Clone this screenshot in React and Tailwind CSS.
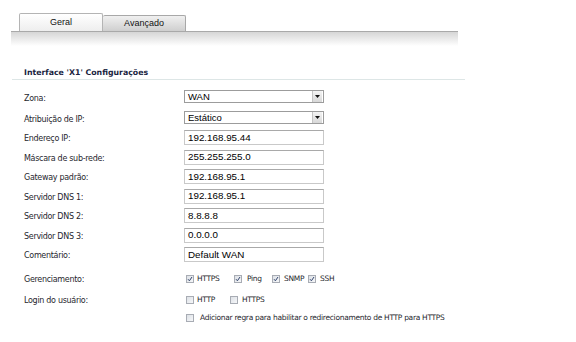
import React from "react";

const lbl = "text-[8px] leading-none text-[#1f1f2e] [font-family:'DejaVu_Sans',sans-serif] tracking-[-0.3px]";

function Select({ value }) {
  return (
    <div className="w-[140px] h-[13px] border border-[#9c9c9c] bg-white flex items-center">
      <span className="flex-1 pl-[3px] text-[9.5px] leading-none text-black [font-family:'Liberation_Sans',Arial,sans-serif]">{value}</span>
      <div className="w-[10px] h-[11px] mr-[1px] border-l border-[#c4c4c4] bg-gradient-to-b from-[#f4f4f4] to-[#d8d8d8] flex items-center justify-center">
        <svg width="5" height="3" viewBox="0 0 5 3"><path d="M0 0h5L2.5 3z" fill="#111" /></svg>
      </div>
    </div>
  );
}

function Input({ value }) {
  return (
    <div className="w-[140px] h-[15px] border border-[#c9c9c9] border-t-[#a9a9a9] bg-white flex items-center pl-[3px] text-[9.8px] leading-none text-black [font-family:'Liberation_Sans',Arial,sans-serif]">
      {value}
    </div>
  );
}

function Check({ checked }) {
  return (
    <div className="w-[8px] h-[8px] border border-[#a8acb4] bg-gradient-to-br from-[#dde1e6] to-[#f6f7f9] flex items-center justify-center shrink-0">
      {checked && (
        <svg width="6" height="6" viewBox="0 0 6 6"><path d="M1 3.2 L2.4 4.8 L5 1" stroke="#34456e" strokeWidth="1" fill="none" /></svg>
      )}
    </div>
  );
}

const cbText = "text-[7.5px] leading-none text-[#1f1f2e] [font-family:'DejaVu_Sans',sans-serif] tracking-[-0.3px]";

function Row({ label, h, children, lo = 3 }) {
  return (
    <div className={`flex items-center ${h}`}>
      <div className="w-[184px] shrink-0 pl-[24px]">
        <span className={`${lbl} block`} style={{ marginTop: lo }}>{label}</span>
      </div>
      <div className="flex items-center">{children}</div>
    </div>
  );
}

export default function App() {
  return (
    <div className="w-[576px] h-[342px] bg-white overflow-hidden relative">
      <div className="flex items-end pl-[19px] pt-[13px] h-[31px]">
        <div className="w-[84px] h-[18px] border border-b-0 border-[#b4b4b4] rounded-t-[2px] bg-gradient-to-b from-[#ffffff] to-[#eeeeee] flex items-center justify-center text-[9px] text-[#111] [font-family:'Liberation_Sans',Arial,sans-serif]">
          Geral
        </div>
        <div className="w-[83px] h-[16px] border border-b-0 border-l-0 border-[#a8a8a8] rounded-t-[2px] bg-gradient-to-b from-[#f0f0f0] to-[#cfcfcf] flex items-center justify-center text-[9px] text-[#111] [font-family:'Liberation_Sans',Arial,sans-serif]">
          Avançado
        </div>
      </div>
      <div className="ml-[11px] w-[447px] h-[15px] border-t border-[#a9a9a9] bg-gradient-to-b from-[#d6d6d6] to-[#ffffff]" />
      <div className="ml-[12px] w-[453px] mt-[20px] h-[14px] pl-[12px] border-b border-[#dde6e6] flex items-center">
        <span className="text-[7.8px] leading-none font-bold text-[#1a1f3f] [font-family:'DejaVu_Sans',sans-serif] tracking-[0px]">Interface 'X1' Configurações</span>
      </div>
      <div className="mt-[6px] flex flex-col">
        <Row label="Zona:" h="h-[21px]" lo={4}><Select value="WAN" /></Row>
        <Row label="Atribuição de IP:" h="h-[21px]" lo={5}><Select value="Estático" /></Row>
        <Row label="Endereço IP:" h="h-[19.5px]"><Input value="192.168.95.44" /></Row>
        <Row label="Máscara de sub-rede:" h="h-[19.5px]"><Input value="255.255.255.0" /></Row>
        <Row label="Gateway padrão:" h="h-[19.5px]"><Input value="192.168.95.1" /></Row>
        <Row label="Servidor DNS 1:" h="h-[19.5px]"><Input value="192.168.95.1" /></Row>
        <Row label="Servidor DNS 2:" h="h-[19.5px]"><Input value="8.8.8.8" /></Row>
        <Row label="Servidor DNS 3:" h="h-[19.5px]"><Input value="0.0.0.0" /></Row>
        <Row label="Comentário:" h="h-[19.5px]"><Input value="Default WAN" /></Row>
        <Row label="Gerenciamento:" h="h-[25px]" lo={5}>
          <div className="flex items-center pl-[2px] mt-[4px]">
            <Check checked /><span className={`${cbText} ml-[3px] w-[37px]`}>HTTPS</span>
            <Check checked /><span className={`${cbText} ml-[5px] w-[25px]`}>Ping</span>
            <Check checked /><span className={`${cbText} ml-[4px] w-[24px]`}>SNMP</span>
            <Check checked /><span className={`${cbText} ml-[4px]`}>SSH</span>
          </div>
        </Row>
        <Row label="Login do usuário:" h="h-[20px]" lo={2}>
          <div className="flex items-center pl-[2px]">
            <Check /><span className={`${cbText} ml-[3px] w-[33px]`}>HTTP</span>
            <Check /><span className={`${cbText} ml-[4px]`}>HTTPS</span>
          </div>
        </Row>
        <Row label="" h="h-[17px]">
          <div className="flex items-center pl-[2px]">
            <Check /><span className={`${cbText} ml-[6px]`}>Adicionar regra para habilitar o redirecionamento de HTTP para HTTPS</span>
          </div>
        </Row>
      </div>
    </div>
  );
}
